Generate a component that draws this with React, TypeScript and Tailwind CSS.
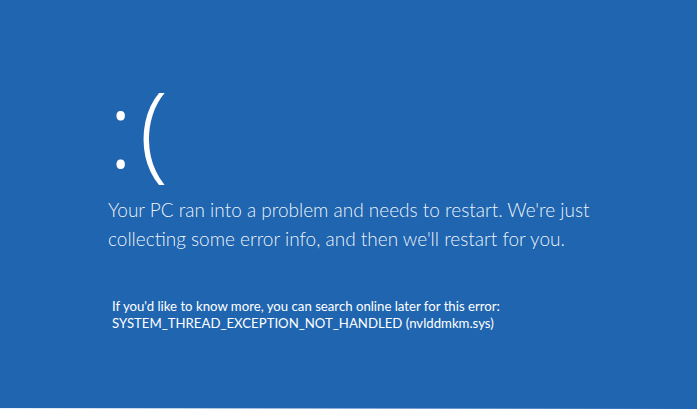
export default function App() {
    return (
        <div className="w-[697px] h-[409px] bg-[#1f65b0] overflow-hidden flex flex-col font-['Lato','Open_Sans',sans-serif] text-white">
            <div className="flex-1 pl-[108px] pt-[62px]">
                <div className="font-['Open_Sans',sans-serif] text-[106px] font-light leading-[130px] tracking-[6px]">:(</div>
                <p className="mt-[3px] text-[19px] font-light leading-[29px] text-white/95">
                    Your PC ran into a problem and needs to restart. We're just
                    <br />
                    collecting some error info, and then we'll restart for you.
                </p>
                <div className="mt-[45px] pl-[4px] text-[13.2px] leading-[17px]">
                    <p>If you'd like to know more, you can search online later for this error:</p>
                    <p>SYSTEM_THREAD_EXCEPTION_NOT_HANDLED (nvlddmkm.sys)</p>
                </div>
            </div>
            <div className="h-[1px] bg-gradient-to-r from-[#eef3f9] to-[#1f65b0]" />
        </div>
    );
}
